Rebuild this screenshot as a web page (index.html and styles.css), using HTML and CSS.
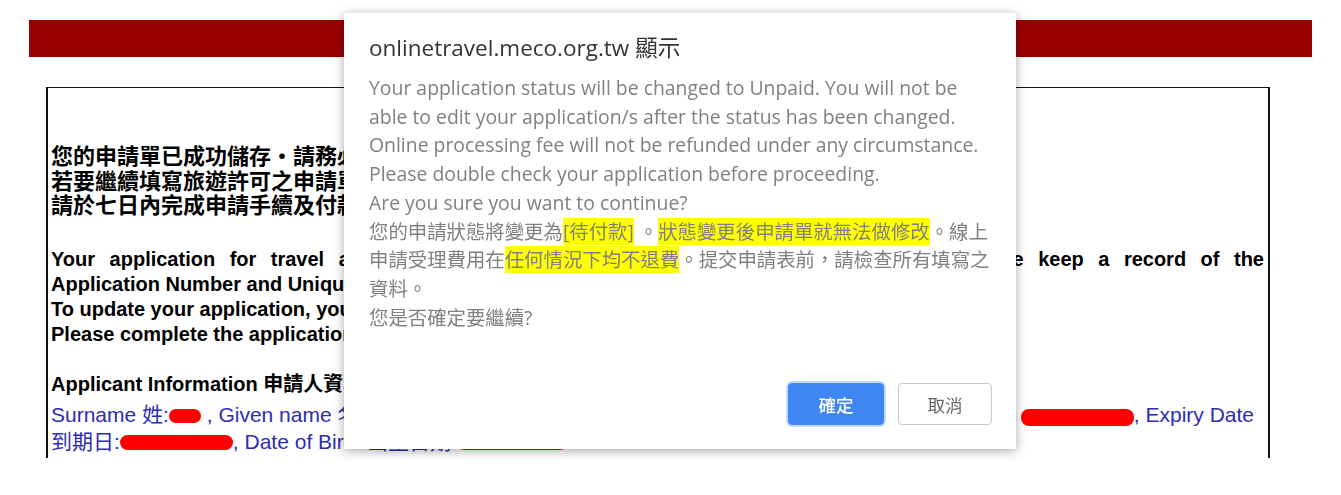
FILE: index.html
```html
<!DOCTYPE html>
<html lang="zh-Hant">

<head>
    <meta charset="utf-8">
    <meta name="viewport" content="width=device-width, initial-scale=1">
    <title>Online Travel Authorization</title>
    <link rel="stylesheet" href="styles.css">
</head>

<body>
    <div class="page">
        <div class="banner"></div>

        <div class="panel">
            <p class="notice-zh">
                您的申請單已成功儲存・請務必記下申請編號及唯一代碼。<br>
                若要繼續填寫旅遊許可之申請單，請點選下方按鈕。<br>
                請於七日內完成申請手續及付款。
            </p>

            <p class="notice-en">
                <span class="justify-line">Your application for travel authorization has been saved successfully and submitted. Please keep a record of the</span>
                Application Number and Unique Code below.<br>
                To update your application, you may click Edit.<br>
                Please complete the application and payment within 7 days.
            </p>

            <p class="applicant-title">Applicant Information 申請人資料</p>

            <div class="applicant-data">
                <div class="data-line">
                    <span>Surname 姓:<span class="redact redact-name"></span> , Given name 名:<span class="redact redact-given"></span> , Passport No. 護照號碼:</span>
                    <span class="data-end"><span class="redact redact-passport"></span>, Expiry Date</span>
                </div>
                <div class="data-line">
                    <span>到期日:<span class="redact redact-date"></span>, Date of Birth 出生日期:<span class="redact redact-birth"></span></span>
                </div>
            </div>
        </div>
    </div>

    <!-- Browser confirm dialog -->
    <div class="dialog">
        <div class="dialog-title">onlinetravel.meco.org.tw 顯示</div>
        <p class="dialog-msg">
            Your application status will be changed to Unpaid. You will not be able to edit your application/s after the status has been changed.<br>
            Online processing fee will not be refunded under any circumstance.<br>
            Please double check your application before proceeding.<br>
            Are you sure you want to continue?<br>
            您的申請狀態將變更為<mark>[待付款]</mark> 。<mark>狀態變更後申請單就無法做修改</mark>。線上申請受理費用在<mark>任何情況下均不退費</mark>。提交申請表前，請檢查所有填寫之資料。<br>
            您是否確定要繼續?
        </p>
        <div class="dialog-actions">
            <button class="btn btn-ok">確定</button>
            <button class="btn btn-cancel">取消</button>
        </div>
    </div>
</body>

</html>
```

FILE: styles.css
```css
* {
    margin: 0;
    padding: 0;
    box-sizing: border-box;
}

html,
body {
    height: 100%;
    overflow: hidden;
    background: #fff;
    font-family: "Liberation Sans", Arial, "Noto Sans CJK TC", sans-serif;
}

.page {
    padding: 20px 29px 0;
}

.banner {
    height: 37px;
    background: #990000;
}

/* Result panel */
.panel {
    margin: 30px 0 0 17px;
    width: 1224px;
    height: 371px;
    border: 2px solid #111;
    border-top-width: 1px;
    border-bottom: none;
    padding: 57px 4px 0 3px;
    overflow: hidden;
    color: #000;
}

.notice-zh {
    font-size: 22px;
    font-weight: bold;
    line-height: 24.5px;
}

.notice-en {
    margin-top: 28px;
    font-size: 20px;
    font-weight: bold;
    line-height: 25px;
}

.justify-line {
    display: block;
    text-align: justify;
    text-align-last: justify;
}

.applicant-title {
    margin-top: 25px;
    font-size: 20px;
    font-weight: bold;
    line-height: 25px;
}

.applicant-data {
    margin-top: 4px;
    font-size: 21px;
    line-height: 27px;
    color: #2d2db4;
    white-space: nowrap;
}

.data-line {
    display: flex;
}

.data-end {
    margin-left: auto;
    margin-right: 10px;
}

.redact {
    display: inline-block;
    height: 14px;
    background: #f00;
    border-radius: 8px;
    vertical-align: -1px;
}

.redact-name {
    width: 32px;
}

.redact-given {
    width: 90px;
}

.redact-passport {
    width: 113px;
    height: 17px;
    vertical-align: -4px;
}

.redact-date {
    width: 113px;
    height: 15px;
}

.redact-birth {
    width: 110px;
}

/* Confirm dialog */
.dialog {
    position: fixed;
    left: 344px;
    top: 13px;
    width: 672px;
    height: 436px;
    padding: 21px 24px 24px 25px;
    display: flex;
    flex-direction: column;
    background: #fff;
    box-shadow: 0 2px 10px rgba(0, 0, 0, 0.35);
    font-family: "Open Sans", "Noto Sans CJK TC", sans-serif;
}

.dialog-title {
    font-size: 22.5px;
    line-height: 28px;
    color: #333;
}

.dialog-msg {
    margin-top: 12px;
    font-size: 19.4px;
    line-height: 28.7px;
    color: #808080;
}

.dialog-msg mark {
    background: #ffff00;
    color: inherit;
}

.dialog-actions {
    margin-top: auto;
    display: flex;
    justify-content: flex-end;
    gap: 14px;
}

.btn {
    height: 42px;
    border-radius: 4px;
    font-family: "Noto Sans CJK TC", sans-serif;
    font-size: 17.5px;
}

.btn-ok {
    width: 96px;
    background: #3f86f3;
    border: 1px solid #3f86f3;
    color: #fff;
    font-weight: 500;
    box-shadow: 0 0 0 2px rgba(66, 133, 244, 0.3);
}

.btn-cancel {
    width: 94px;
    background: #fff;
    border: 1px solid #c8c8c8;
    color: #666;
}
```
